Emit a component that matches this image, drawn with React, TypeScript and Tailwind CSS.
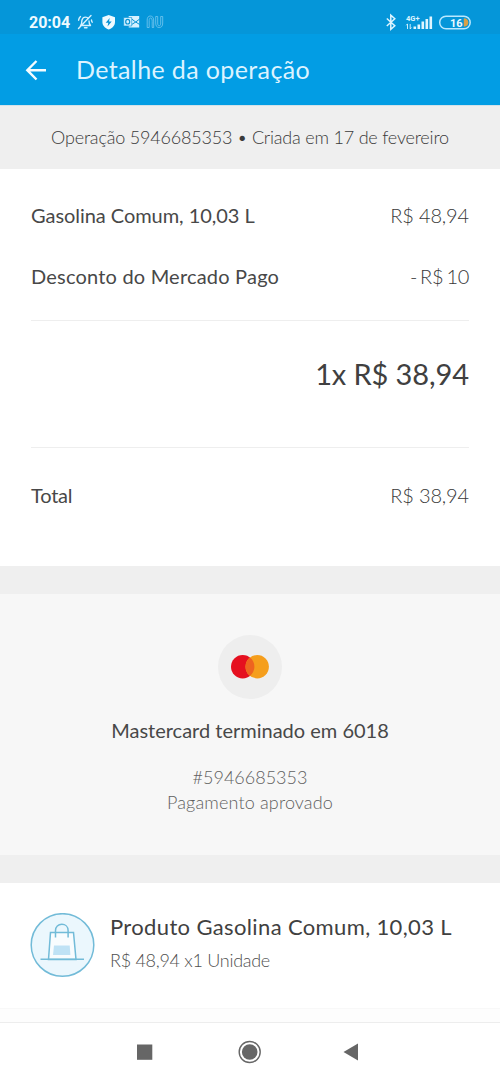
function StatusIcons() {
  return (
    <svg width="96" height="18" viewBox="0 0 96 18" fill="none">
      <g stroke="#d5f1ff" strokeWidth="1.4" strokeLinecap="round" strokeLinejoin="round">
        <path d="M4.5 12.5c1.500-1.500 1-3.500 1.500-5.500.6-2 2-2.900 3.500-2.900 1.200 0 2.200.5 2.900 1.500M13 8c0 2 .4 3.200 1.500 4.500H6.500M8.500 14.700h2.500M15 2.500L2.500 15.500M2.600 7.200c.2-1.500.8-2.600 1.900-3.600M15.500 7c0 1 .2 1.500.7 2.200" />
      </g>
      <g transform="translate(1.700 0)">
        <path d="M31 2l6.300 2.300v4.600c0 3.500-2.500 6.100-6.300 7.600-3.800-1.500-6.300-4.100-6.300-7.600V4.300z" fill="#effaff" />
        <path d="M32 5l-4 4.800h2.600L29.800 13.500 34 8.500h-2.700z" fill="#0992d3" />
        <path d="M51 3h10.500v11.500H51z" fill="#d5f1ff" />
        <path d="M54 6l4 3 4-3M54 11.500l4-2.500 4 2.500" stroke="#0992d3" strokeWidth="1" />
        <path d="M46 4.500h8v8.500h-8z" fill="#d5f1ff" stroke="#0992d3" strokeWidth=".6" />
        <ellipse cx="50" cy="8.700" rx="2" ry="2.300" stroke="#0992d3" strokeWidth="1.200" />
        <g stroke="#79c8ef" strokeWidth=".8">
          <path d="M69.500 14.500V7c0-2.500 1.200-4 3-4 2.600 0 3.500 2 3.500 5v6.500M71.500 14.500V7.500c0-1.600.5-2.500 1.300-2.500 1.300 0 1.700 1.500 1.700 3.500v6M69.500 14.500h2M74.500 14.500h1.500" />
          <path d="M78 3.500v6.500c0 3 1.200 4.500 3.500 4.500s3.500-1.500 3.500-4.500V3.500h-2v6.500c0 2-.5 2.800-1.500 2.800S80 12 80 10V3.500z" />
        </g>
      </g>
    </svg>
  );
}

function Signal() {
  return (
    <svg width="90" height="20" viewBox="0 0 90 20" fill="none">
      <path d="M1.800 6.500l8 7.300-4 3.500V3.200l4 3.500-8 7.300" stroke="#dff5ff" strokeWidth="1.500" />
      <text x="21" y="8.500" fontFamily="Roboto, sans-serif" fontSize="7.500" fontWeight="700" fill="#dff5ff">4G+</text>
      <path d="M22.500 17v-5M21.300 13.300l1.200-1.500M25.200 12v5M26.400 15.500L25.200 17" stroke="#dff5ff" strokeWidth=".9" />
      <path d="M28.500 14.500h2.600V17h-2.600zM32.500 12.500h2.600V17h-2.600zM36.500 9.500h2.600V17h-2.600zM40.500 7h2.600v10h-2.600zM44.500 4.500h2.600V17h-2.600z" fill="#dff5ff" />
      <rect x="54.700" y="4.200" width="30.500" height="12.600" rx="6.300" stroke="#b9e8ff" strokeWidth="1.500" />
      <path d="M78.800 6.300c3 0 4.500 1.900 4.500 4.200s-1.500 4.200-4.500 4.200z" fill="#d9a047" />
      <text x="65" y="14.500" fontFamily="Roboto, sans-serif" fontSize="11" fontWeight="700" fill="#eefaff">16</text>
    </svg>
  );
}

export default function App() {
  return (
    <div className="flex h-[1082px] w-[500px] flex-col overflow-hidden bg-white font-['Lato',sans-serif] whitespace-nowrap">
      <div className="flex h-[34px] shrink-0 items-center bg-[#0596d9] pt-[10px] pr-[25px] pl-[29px]">
        <span className="w-[47px] pt-px font-['Roboto',sans-serif] text-[16px] leading-none font-bold tracking-[0px] text-[#eefaff]">20:04</span>
        <StatusIcons />
        <div className="ml-auto"><Signal /></div>
      </div>
      <header className="flex h-[71px] shrink-0 items-center bg-[#029de4] pl-[25px]">
        <svg width="22" height="22" viewBox="0 0 22 22" fill="none" stroke="#f4fcff" strokeWidth="2.400">
          <path d="M11.500 2L2.300 11.200l9.200 9.300M2.300 11.200H21" />
        </svg>
        <h1 className="ml-[29px] pb-[2px] text-[25px] leading-[30px] font-normal tracking-[0.38px] text-[#dcf3ff]">Detalhe da operação</h1>
      </header>
      <div className="flex h-[64px] shrink-0 items-center justify-center border-t border-[#d3e2ea] bg-[#efefef] pb-px text-[18px] font-light tracking-[-0.19px] text-[#3a3a3a]">
        Operação 5946685353 • Criada em 17 de fevereiro
      </div>
      <section className="h-[397px] shrink-0 px-[31px] pt-[17px] text-[20px]">
        <div className="flex h-[61px] items-center justify-between pb-[3px]">
          <span className="tracking-[-0.05px] text-[#484848]">Gasolina Comum, 10,03 L</span>
          <span className="font-light tracking-[-0.15px] text-[#383838]">R$ 48,94</span>
        </div>
        <div className="flex h-[61px] items-center justify-between pb-[3px]">
          <span className="tracking-[0.2px] text-[#484848]">Desconto do Mercado Pago</span>
          <span className="font-light tracking-[-0.3px] [word-spacing:-2px] text-[#383838]">- R$ 10</span>
        </div>
        <div className="mt-[12px] flex h-[128px] items-center justify-end border-y border-[#eeeeee] pb-[20px] text-[29px] tracking-[-0.1px] text-[#404040]">
          1x R$ 38,94
        </div>
        <div className="mt-[18px] flex h-[61px] items-center justify-between pb-[3px]">
          <span className="tracking-[-0.2px] text-[#484848]">Total</span>
          <span className="font-light tracking-[-0.15px] text-[#383838]">R$ 38,94</span>
        </div>
      </section>
      <div className="h-[28px] shrink-0 bg-[#efefef]" />
      <section className="flex h-[261px] shrink-0 flex-col items-center bg-[#f7f7f7] pt-[41px]">
        <svg width="64" height="64" viewBox="0 0 64 64">
          <circle cx="32" cy="32" r="32" fill="#eeeeee" />
          <circle cx="24.700" cy="31.700" r="11.700" fill="#e50f1f" />
          <circle cx="39.200" cy="31.700" r="11.700" fill="#f59e1c" />
          <path d="M31.950 22.500a11.700 11.700 0 0 1 0 18.400a11.700 11.700 0 0 1 0-18.400z" fill="#ee6420" />
        </svg>
        <p className="mt-[19px] text-[20px] leading-[24px] text-[#484848]">Mastercard terminado em 6018</p>
        <p className="mt-[23px] text-[18px] leading-[25px] font-light text-[#606060]">#5946685353</p>
        <p className="text-[18px] leading-[25px] font-light tracking-[0.15px] text-[#606060]">Pagamento aprovado</p>
      </section>
      <div className="h-[28px] shrink-0 bg-[#efefef]" />
      <section className="flex h-[125px] shrink-0 items-center pl-[30px]">
        <svg width="65" height="65" viewBox="0 0 65 65" fill="none" stroke="#72bbd8" strokeWidth="1.500">
          <circle cx="32.500" cy="32" r="31.300" fill="#ebf7fd" />
          <path d="M20.500 19.500h23l2.500 27H18.500z" fill="#f8fcfe" />
          <path d="M25.500 24.500V17.500c0-3.700 2.700-6.200 6.300-6.200s6.300 2.500 6.300 6.200v7M10.500 46.300h43.500" />
          <path d="M24 32.500h15.700l.7 9.500H23z" fill="#bfe2f5" stroke="none" />
        </svg>
        <div className="ml-[15px] pb-[5px]">
          <p className="text-[22px] leading-[30px] tracking-[0.36px] text-[#404040]">Produto Gasolina Comum, 10,03 L</p>
          <p className="mt-[4px] text-[18px] leading-[28px] font-light tracking-[-0.28px] text-[#505050]">R$ 48,94 x1 Unidade</p>
        </div>
      </section>
      <div className="h-[14px] shrink-0 border-t border-[#f8f8f8] bg-[#fdfdfd]" />
      <nav className="flex-1 border-t border-[#ededed]">
        <svg width="500" height="58" viewBox="0 0 500 58" fill="#666666">
          <rect x="137" y="21.500" width="15.300" height="15.300" />
          <circle cx="249.700" cy="29" r="7.800" />
          <circle cx="249.700" cy="29" r="10.500" fill="none" stroke="#666666" strokeWidth="1.400" />
          <path d="M343.500 29L358 20.500v17z" />
        </svg>
      </nav>
    </div>
  );
}
